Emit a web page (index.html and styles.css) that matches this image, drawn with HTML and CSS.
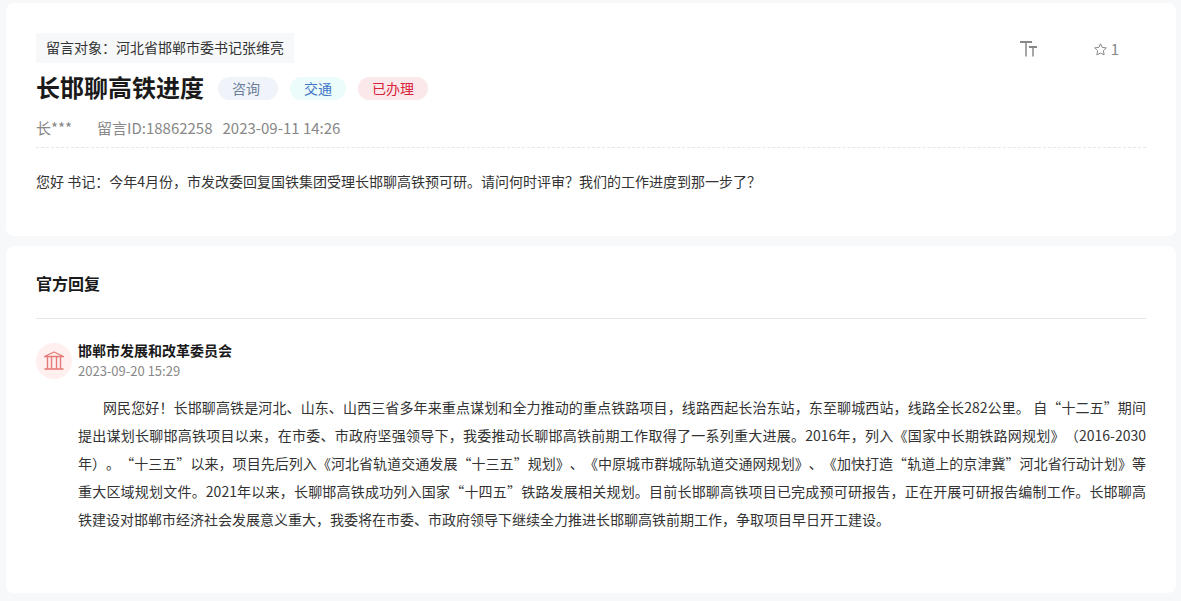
FILE: index.html
```html
<!DOCTYPE html>
<html lang="zh-CN">
<head>
    <meta charset="UTF-8">
    <meta name="viewport" content="width=device-width, initial-scale=1.0">
    <title>长邯聊高铁进度</title>
    <link rel="stylesheet" href="styles.css">
</head>
<body>

<article class="card">
    <div class="card-top">
        <p class="target">留言对象：河北省邯郸市委书记张维亮</p>
        <div class="actions">
            <button type="button" class="action" aria-label="字体大小">
                <svg width="18" height="16" viewBox="0 0 18 16" fill="none" stroke="currentColor">
                    <path d="M0 1H12M9 6H17" stroke-width="2"/>
                    <path d="M6 1V15.5M13 6V15.5" stroke-width="1.5"/>
                </svg>
            </button>
            <button type="button" class="action" aria-label="收藏 1">
                <svg width="13" height="13" viewBox="0 0 13 13" fill="none" stroke="currentColor" stroke-linejoin="round">
                    <path d="M6.5 0.8L8.2 4.4L12.3 4.9L9.4 7.7L10.1 11.9L6.5 10L2.9 11.9L3.6 7.7L0.7 4.9L4.8 4.4Z"/>
                </svg>
                <span>1</span>
            </button>
        </div>
    </div>
    <div class="title-row">
        <h1>长邯聊高铁进度</h1>
        <div class="tags">
            <span class="tag tag-type">咨询</span>
            <span class="tag tag-field">交通</span>
            <span class="tag tag-state">已办理</span>
        </div>
    </div>
    <div class="meta">
        <span class="user">长***</span>
        <span>留言ID:18862258</span>
        <span>2023-09-11 14:26</span>
    </div>
    <p class="message">您好 书记：今年4月份，市发改委回复国铁集团受理长邯聊高铁预可研。请问何时评审？我们的工作进度到那一步了？</p>
</article>

<section class="card">
    <h2>官方回复</h2>
    <div class="reply">
        <div class="avatar">
            <svg width="20" height="20" viewBox="0 0 20 20" fill="none" stroke="currentColor">
                <path d="M0.5 5.5L10 1L19.5 5.5Z" stroke-width="1.3" stroke-linejoin="round"/>
                <path d="M0.5 18H19.5" stroke-width="1.6"/>
                <path d="M3.5 6V17.5M7.5 6V17.5M12.5 6V17.5M16.5 6V17.5" stroke-width="1.4"/>
            </svg>
        </div>
        <div class="reply-main">
            <h3>邯郸市发展和改革委员会</h3>
            <time datetime="2023-09-20 15:29">2023-09-20 15:29</time>
            <p class="reply-text">网民您好！长邯聊高铁是河北、山东、山西三省多年来重点谋划和全力推动的重点铁路项目，线路西起长治东站，东至聊城西站，线路全长282公里。 自“十二五”期间提出谋划长聊邯高铁项目以来，在市委、市政府坚强领导下，我委推动长聊邯高铁前期工作取得了一系列重大进展。2016年，列入《国家中长期铁路网规划》（2016-2030年）。“十三五”以来，项目先后列入《河北省轨道交通发展“十三五”规划》、《中原城市群城际轨道交通网规划》、《加快打造“轨道上的京津冀”河北省行动计划》等重大区域规划文件。2021年以来，长聊邯高铁成功列入国家“十四五”铁路发展相关规划。目前长邯聊高铁项目已完成预可研报告，正在开展可研报告编制工作。长邯聊高<span class="nowrap">铁建设</span>对邯郸市经济社会发展意义重大，我委将在市委、市政府领导下继续全力推进长邯聊高铁前期工作，争取项目早日开工建设。</p>
        </div>
    </div>
</section>

</body>
</html>
```
FILE: styles.css
```css
* {
    box-sizing: border-box;
}
body {
    margin: 0;
    padding: 3px 5px 7px 6px;
    background-color: #f7f8fa;
    color: #333;
    font-family: "Noto Sans CJK SC", sans-serif;
    font-size: 14px;
    text-spacing-trim: space-all;
}
h1, h2, h3, p {
    margin: 0;
}
.card {
    padding: 30px;
    background-color: #fff;
    border-radius: 8px;
}
.card + .card {
    margin-top: 10px;
    padding: 22px 30px 60px;
}
.card-top {
    display: flex;
    justify-content: space-between;
    align-items: center;
}
.target {
    padding: 0 10px 2px;
    line-height: 28px;
    background-color: #f7f8fa;
}
.actions {
    display: flex;
    gap: 56px;
    padding: 2px 27px 0 0;
}
.action {
    display: flex;
    align-items: center;
    gap: 4px;
    padding: 0;
    border: 0;
    background: none;
    color: #888;
    font-family: inherit;
    font-size: 15px;
    line-height: 20px;
    cursor: pointer;
}
.title-row {
    display: flex;
    align-items: center;
    gap: 14px;
    margin-top: 8px;
}
h1 {
    padding-bottom: 2px;
    color: #1a1a1a;
    font-size: 24px;
    line-height: 32px;
}
.tags {
    display: flex;
    gap: 12px;
}
.tag {
    padding: 0 14px;
    border-radius: 12px;
    line-height: 23px;
}
.tag-type {
    padding-right: 18px;
    background-color: #f0f4fa;
    color: #6e7f9b;
}
.tag-field {
    background-color: #ebfcfa;
    color: #3f74c7;
}
.tag-state {
    background-color: #fae8ea;
    color: #d9243c;
}
.meta {
    display: flex;
    gap: 10px;
    padding: 12px 0 8px;
    border-bottom: 1px dashed #e6e6e6;
    color: #888;
    font-size: 15px;
    line-height: 22px;
}
.user {
    margin-right: 15px;
}
.message {
    padding: 19px 0 11px;
    line-height: 28px;
}
h2 {
    padding-bottom: 20px;
    border-bottom: 1px solid #e6e6e6;
    color: #1a1a1a;
    font-size: 16px;
    line-height: 30px;
}
.reply {
    display: flex;
    gap: 6px;
    padding-top: 24px;
}
.avatar {
    display: flex;
    flex: none;
    align-items: center;
    justify-content: center;
    width: 36px;
    height: 36px;
    border-radius: 50%;
    background-color: #ffefef;
    color: #e67a76;
}
h3 {
    padding-bottom: 4px;
    color: #1a1a1a;
    font-size: 14px;
    line-height: 14px;
}
time {
    display: block;
    color: #888;
    font-size: 13px;
    line-height: 20px;
}
.reply-text {
    margin-top: 12px;
    line-height: 28px;
    text-align: justify;
    text-indent: 25px;
}
.nowrap {
    white-space: nowrap;
}
```
